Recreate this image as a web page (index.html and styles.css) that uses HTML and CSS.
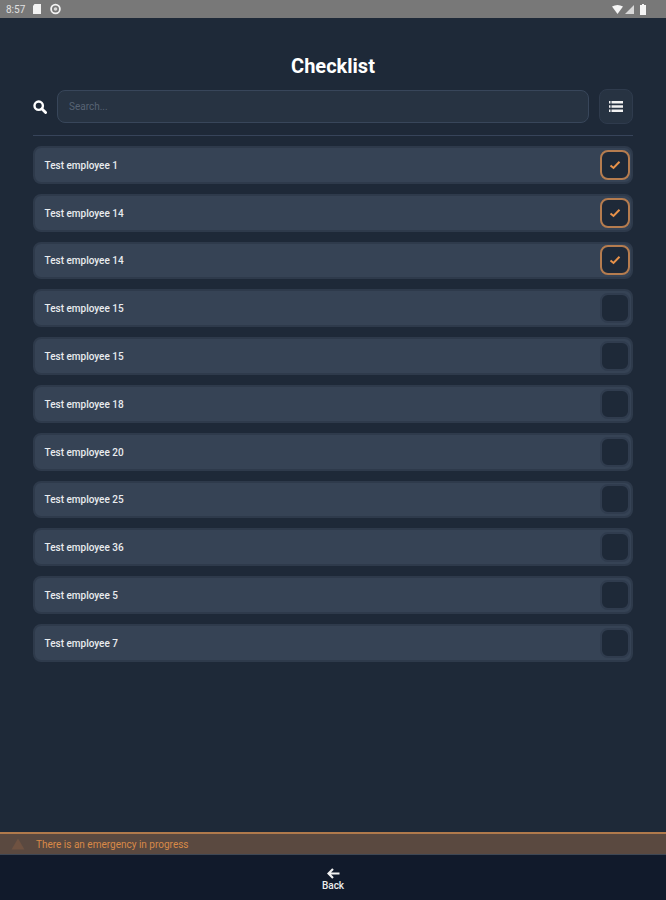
FILE: index.html
```html
<!DOCTYPE html>
<html lang="en">
<head>
    <meta charset="UTF-8">
    <meta name="viewport" content="width=device-width, initial-scale=1.0">
    <title>Checklist</title>
    <link rel="stylesheet" href="styles.css">
</head>
<body>
    <div class="status-bar">
        <div class="status-left">
            <span class="status-time">8:57</span>
            <svg class="status-icon" width="10" height="12" viewBox="0 0 10 12"><path d="M2.5 1H9v10H1V3z" fill="#f2f2f2"/></svg>
            <svg class="status-icon" width="13" height="12" viewBox="0 0 13 12"><circle cx="6.5" cy="6" r="4.4" fill="none" stroke="#f2f2f2" stroke-width="1.8"/><circle cx="6.5" cy="6" r="1.8" fill="#d8d8d8"/></svg>
        </div>
        <div class="status-right">
            <svg width="11" height="9" viewBox="0 0 11 9"><path d="M0 1.5Q5.5-1.5 11 1.5L5.5 9z" fill="#f5f5f5"/></svg>
            <svg width="9" height="9" viewBox="0 0 9 9"><path d="M9 0V9H0z" fill="#d8d8d8"/></svg>
            <svg class="status-battery" width="6" height="11" viewBox="0 0 6 11"><path d="M2 0H4V1H6V11H0V1H2z" fill="#f5f5f5"/></svg>
        </div>
    </div>

    <div class="container">
        <h1 class="title">Checklist</h1>

        <div class="search-row">
            <svg class="search-icon" width="14" height="14" viewBox="0 0 14 14"><circle cx="5.7" cy="5.7" r="4.2" fill="none" stroke="#fff" stroke-width="2.4"/><path d="M8.8 8.8L12.6 12.6" stroke="#fff" stroke-width="2.8" stroke-linecap="round"/></svg>
            <div class="search-input">Search...</div>
            <div class="list-btn">
                <svg width="14" height="13" viewBox="0 0 14 13"><path d="M0 1H1.5V3.6H0zM2.5 1H14V3.6H2.5zM0 5.2H1.5V7.8H0zM2.5 5.2H14V7.8H2.5zM0 9.4H1.5V12H0zM2.5 9.4H14V12H2.5z" fill="#f2f2f2"/></svg>
            </div>
        </div>

        <div class="divider"></div>

        <div class="list">
            <div class="row"><span class="row-name">Test employee 1</span><div class="check checked"><svg width="12" height="10" viewBox="0 0 12 10"><path d="M1.5 5.5L4.5 8L10.5 1.8" fill="none" stroke="#e8924a" stroke-width="2"/></svg></div></div>
            <div class="row"><span class="row-name">Test employee 14</span><div class="check checked"><svg width="12" height="10" viewBox="0 0 12 10"><path d="M1.5 5.5L4.5 8L10.5 1.8" fill="none" stroke="#e8924a" stroke-width="2"/></svg></div></div>
            <div class="row"><span class="row-name">Test employee 14</span><div class="check checked"><svg width="12" height="10" viewBox="0 0 12 10"><path d="M1.5 5.5L4.5 8L10.5 1.8" fill="none" stroke="#e8924a" stroke-width="2"/></svg></div></div>
            <div class="row"><span class="row-name">Test employee 15</span><div class="check"></div></div>
            <div class="row"><span class="row-name">Test employee 15</span><div class="check"></div></div>
            <div class="row"><span class="row-name">Test employee 18</span><div class="check"></div></div>
            <div class="row"><span class="row-name">Test employee 20</span><div class="check"></div></div>
            <div class="row"><span class="row-name">Test employee 25</span><div class="check"></div></div>
            <div class="row"><span class="row-name">Test employee 36</span><div class="check"></div></div>
            <div class="row"><span class="row-name">Test employee 5</span><div class="check"></div></div>
            <div class="row"><span class="row-name">Test employee 7</span><div class="check"></div></div>
        </div>
    </div>

    <div class="alert-bar">
        <svg class="alert-icon" width="14" height="12" viewBox="0 0 14 12"><path d="M7 0.5L13.5 11.5H0.5z" fill="#6f5241"/></svg>
        <span>There is an emergency in progress</span>
    </div>

    <div class="bottom-nav">
        <svg width="13" height="11" viewBox="0 0 13 11"><path d="M6 1L1.5 5.5L6 10M2 5.5H12.5" fill="none" stroke="#f2f2f2" stroke-width="2.2"/></svg>
        <span class="back-label">Back</span>
    </div>
</body>
</html>
```

FILE: styles.css
```css
* {
    margin: 0;
    padding: 0;
    box-sizing: border-box;
}

body {
    font-family: Roboto, 'Liberation Sans', sans-serif;
    background: #1e2938;
    color: #fff;
    width: 666px;
    height: 900px;
    display: flex;
    flex-direction: column;
    overflow: hidden;
}

.status-bar {
    height: 18px;
    flex-shrink: 0;
    background: #787878;
    display: flex;
    align-items: center;
    justify-content: space-between;
    padding: 0 20px 0 6px;
}

.status-left {
    display: flex;
    align-items: center;
    gap: 7px;
}

.status-time {
    font-size: 10px;
    color: #e0e0e0;
}

.status-right {
    display: flex;
    align-items: center;
    gap: 2px;
}

.status-battery {
    margin-left: 4px;
}

.container {
    flex: 1;
    padding: 0 33px;
}

.title {
    font-size: 20px;
    font-weight: 700;
    line-height: 24px;
    text-align: center;
    margin-top: 36px;
    margin-bottom: 11px;
}

.search-row {
    display: flex;
    align-items: center;
    height: 35px;
}

.search-icon {
    flex-shrink: 0;
}

.search-input {
    flex: 1;
    height: 33px;
    margin-left: 10px;
    margin-right: 10px;
    padding-left: 11px;
    background: #273342;
    border: 1px solid #38465a;
    border-radius: 8px;
    font-size: 10px;
    line-height: 31px;
    color: #576374;
}

.list-btn {
    width: 34px;
    height: 35px;
    background: #273342;
    border: 1px solid #2f3b4d;
    border-radius: 8px;
    display: flex;
    align-items: center;
    justify-content: center;
}

.divider {
    height: 1px;
    background: #37445a;
    margin-top: 11px;
    margin-bottom: 10px;
}

.list {
    display: flex;
    flex-direction: column;
    gap: 10px;
}

.row {
    height: 37.8px;
    background: #364355;
    border: 2px solid #2e3a4b;
    border-radius: 8px;
    display: flex;
    align-items: center;
    justify-content: space-between;
    padding: 0 1px 0 9.5px;
}

.row-name {
    font-size: 10px;
    font-weight: 500;
    padding-top: 1px;
    color: #e9ecef;
}

.check {
    width: 30px;
    height: 30px;
    background: #1e2938;
    border: 2px solid #303c4e;
    border-radius: 8px;
    display: flex;
    align-items: center;
    justify-content: center;
}

.check.checked {
    border-color: #b57c4f;
}

.alert-bar {
    height: 23px;
    flex-shrink: 0;
    background: #5a4940;
    border-top: 2px solid #b07a4c;
    border-bottom: 1px solid #3e4754;
    display: flex;
    align-items: center;
    padding-left: 11px;
    gap: 11px;
    font-size: 10px;
    color: #d98a48;
}

.bottom-nav {
    height: 45px;
    flex-shrink: 0;
    background: #111a2b;
    display: flex;
    flex-direction: column;
    align-items: center;
    justify-content: center;
    padding-top: 5px;
}

.back-label {
    font-size: 10px;
    font-weight: 500;
    line-height: 14px;
    color: #ececec;
}
```
